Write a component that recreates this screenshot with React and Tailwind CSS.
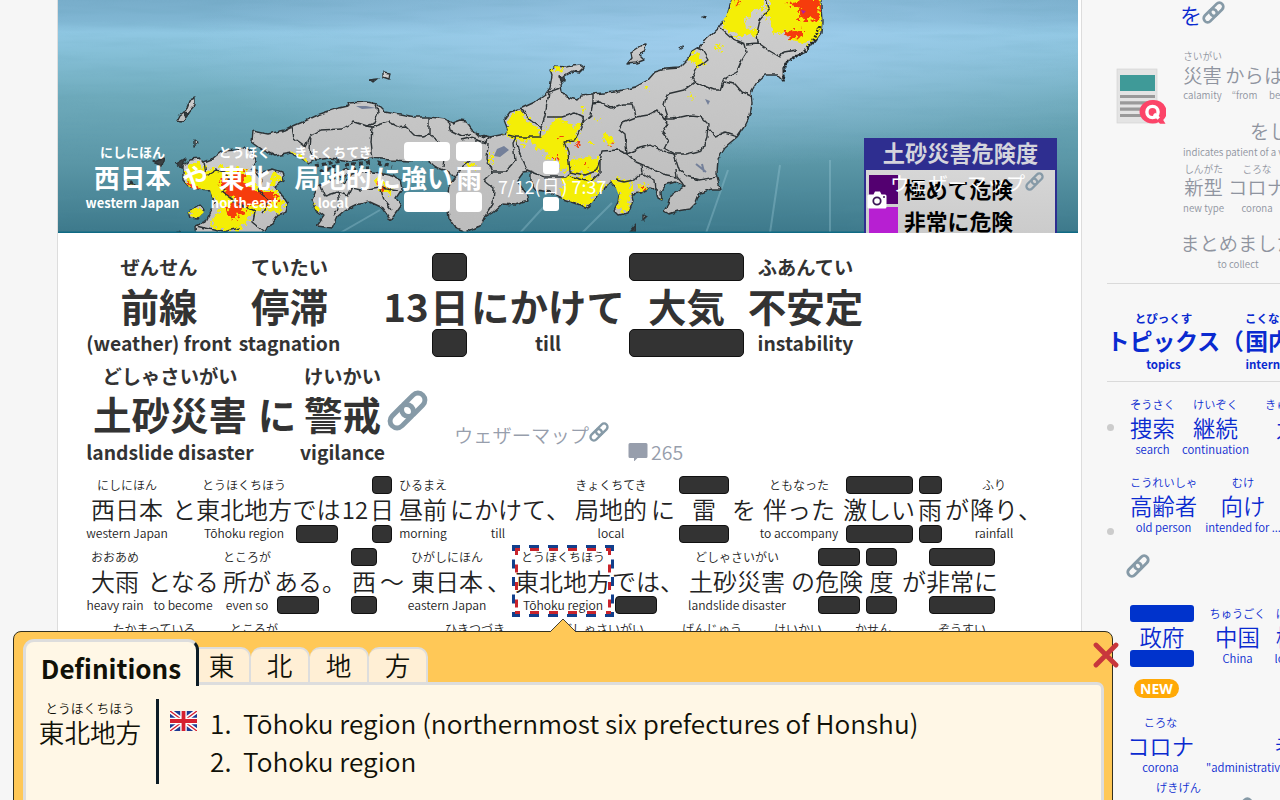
import React from "react";

/* Word metrics for each text scale: reading line, main line, gloss line */
const HERO = {
  ruby: "h-[19px] text-[13px]",
  main: "h-[31px] text-[25.7px]",
  gloss: "h-[20px] text-[13px]",
  box: "bg-white rounded-[4px]",
  nudge: "",
};
const HEAD = {
  ruby: "h-[28px] text-[19.3px]",
  main: "h-[48px] text-[38.5px]",
  gloss: "h-[28px] text-[19.3px]",
  box: "bg-[#333] border border-[#111] rounded-[5px]",
  nudge: "mt-[2px]",
};
const BODY = {
  ruby: "h-[18px] text-[12px]",
  main: "h-[30.5px] text-[24px]",
  gloss: "h-[18px] text-[12.1px]",
  box: "bg-[#333] border border-[#111] rounded-[4px]",
  nudge: "",
};
const SIDE = {
  ruby: "h-[14px] text-[9.7px]",
  main: "h-[25px] text-[19.3px]",
  gloss: "h-[14px] text-[9.7px]",
  box: "",
  nudge: "mt-[2px]",
};
const TOPIC = {
  ruby: "h-[17px] text-[11.5px]",
  main: "h-[29px] text-[22.8px]",
  gloss: "h-[17px] text-[11.5px]",
  box: "",
  nudge: "",
};
const LIST = {
  ruby: "h-[17px] text-[11.2px]",
  main: "h-[28px] text-[22.4px]",
  gloss: "h-[17px] text-[11.3px]",
  box: "bg-[#0033cc] rounded-[3px]",
  nudge: "",
};

const LINE = "flex w-full shrink-0 items-center justify-center leading-none";

/* a word with its reading above and gloss below; rb / gb are hidden (masked) lines */
function Word({ s, c, r, k, g, rb, gb }) {
  return (
    <span className={`flex shrink-0 flex-col items-center ${c}`}>
      <span className={`${LINE} ${s.ruby}`}>
        {rb ? <span className={`h-full shrink-0 ${rb} ${s.box}`} /> : <span className={s.nudge}>{r}</span>}
      </span>
      <span className={`${LINE} ${s.main}`}>{k}</span>
      <span className={`${LINE} ${s.gloss}`}>
        {gb ? <span className={`h-full shrink-0 ${gb} ${s.box}`} /> : <span className={s.nudge}>{g}</span>}
      </span>
    </span>
  );
}

function Row({ s, words, className = "" }) {
  return (
    <div className={`flex shrink-0 whitespace-nowrap ${className}`}>
      {words.map((w, i) => (
        <Word key={i} s={s} {...w} />
      ))}
    </div>
  );
}

function LinkIcon({ className }) {
  return (
    <svg viewBox="0 0 40 40" className={`shrink-0 ${className}`} fill="none" stroke="#869aa7" strokeWidth="4.8">
      <rect x="-13.3" y="-6.8" width="26.6" height="13.6" rx="6.800" transform="translate(25.6 14.4) rotate(-45)" />
      <rect x="-13.3" y="-6.8" width="26.6" height="13.6" rx="6.800" transform="translate(14.4 25.6) rotate(-45)" />
    </svg>
  );
}

const HONSHU =
  "M253 131L268 134 285 130 291 127 305 121 320 114 335 109 348 106 347 103 366 102 377 104 384 111 400 114 415 117 430 117 445 119 452 123 460 120 467 121 469 126 475 134 490 137 505 134 508 130 504 120 510 112 522 108 535 102 545 95 550 88 552 76 550 70 555 66 565 67 580 65 584 68 580 72 572 71 565 75 560 84 561 91 567 97 577 100 582 95 592 94 615 92 635 87 648 80 655 72 665 69 680 68 688 60 692 51 700 46 706 39 719 27 728 12 733 -4 821 -4 821 8 822 22 821 33 815 41 807 51 796 56 787 61 783 68 784 82 777 75 765 75 757 82 751 92 752 103 750 115 744 127 737 137 725 147 717 160 716 173 720 189 712 189 700 193 696 203 690 209 678 211 669 214 664 211 668 204 670 196 676 192 685 186 675 182 665 185 661 192 662 200 658 198 656 190 650 188 640 193 632 194 633 201 628 213 619 215 614 210 618 202 619 196 616 188 611 181 604 189 596 197 588 208 575 203 560 198 550 192 536 190 531 183 531 172 523 173 517 181 526 193 528 201 515 205 502 204 492 213 484 218 480 226 466 232 455 227 449 218 447 203 449 186 455 178 449 172 436 167 425 159 410 161 390 160 372 158 350 161 330 158 316 160 309 164 301 158 292 153 275 156 263 150 252 142Z";
const KYUSHU =
  "M183 166L190 159 200 158 204 162 212 159 222 151 238 150 244 146 253 153 255 162 251 169 262 172 273 169 282 172 284 180 275 186 280 192 288 204 286 212 278 215 268 228 262 240 196 240 195 226 205 222 210 212 214 202 210 190 200 189 190 188 183 180Z";
const SHIKOKU =
  "M318 186L328 181 337 179 344 183 352 174 366 171 380 173 392 176 400 180 402 189 396 198 401 206 391 220 383 208 370 202 355 205 345 210 337 217 332 228 317 226 324 216 315 209 312 200Z";
const BORDERS = [
  "M292 127L294 138 305 146 310 136 320 130 342 129 354 122 366 126 374 123 378 113 376 104",
  "M366 126L372 127 388 122 398 127 405 126 414 135 422 136 429 134 429 117",
  "M372 127L371 142 373 160",
  "M310 137L309 148 316 160",
  "M448 120L450 130 458 134 462 136 471 134M461 140L470 138 486 143 488 137M429 134L440 142 445 150 443 167",
  "M488 143L487 160 492 172 506 172 515 160 513 143 516 137M476 141L474 158 463 166 455 178M492 172L484 180 494 188 493 204 484 218",
  "M516 137L518 150 527 170M516 137L508 135M516 137L540 137 541 128 530 120 521 110",
  "M541 128L545 116 547 103 549 92 560 88",
  "M547 117L562 117 575 113 583 117 584 121 591 115 593 100 593 94",
  "M584 121L578 134 574 141 564 142 568 152 570 172 565 177 545 177 527 170",
  "M570 172L585 175 596 171 600 160 602 151 618 150 627 154 625 135 619 130 623 122 636 117 633 104 622 104 612 108 606 106 600 102 593 103",
  "M636 117L648 115 658 110 664 119 668 117 664 105 667 94 684 90 695 82 692 77 698 66 703 64 708 60 702 50 697 48",
  "M695 82L704 86 714 90 720 90 724 79 737 72 742 60 747 52 745 44 731 38 720 28",
  "M724 82L735 84 742 92 751 96",
  "M747 44L758 43 757 33 760 20 769 9 766 -2M758 43L768 50 780 57 784 52 796 50",
  "M664 119L672 119 690 115 700 116 708 124 707 137 702 150 686 154 674 154 664 148 668 140 662 132 668 122 664 119",
  "M708 128L715 136 725 133 737 137",
  "M627 154L640 148 651 145 664 152 674 154 679 170 686 176 700 180 716 177",
  "M627 154L636 162 650 168 662 174 677 177M641 165L642 173 634 180 624 182 616 180M600 160L600 173 590 182 570 176",
  "M677 177L676 170M677 177L683 184M642 173L655 180 656 190",
  "M204 162L206 176 216 170 225 172 231 182 222 192 238 204 254 212 252 222 264 232M253 168L262 180 258 190 270 200 262 212M196 226L222 232 240 228",
  "M320 184L325 196 338 192 348 196 352 188 362 190 380 187 398 190M338 192L340 206 333 216M380 187L384 200 392 210",
];
const YELLOW = [
  "M733 -4L767 -4 764 8 752 12 744 22 747 30 757 27 757 36 747 34 740 38 728 30 720 26Z",
  "M770 -4L821 -4 823 30 816 40 807 44 790 40 784 32 775 34 770 24 766 14Z",
  "M688 62L694 51 699 54 700 60 708 62 702 66 695 64Z",
  "M505 130L512 112 520 110 528 120 537 126 540 136 548 128 556 118 566 122 576 127 582 117 582 126 576 134 578 142 566 142 568 156 571 170 562 171 557 160 545 158 546 150 535 148 530 140 522 141 506 136Z",
  "M570 160L585 157 598 158 600 166 596 174 583 172 572 174Z",
  "M563 178L575 176 588 176 598 182 606 184 604 190 594 198 588 207 575 203 560 198 562 190Z",
  "M611 181L622 179 632 182 632 194 628 200 632 204 626 212 618 210 620 200 616 190Z",
  "M636 185L649 184 644 188 654 195 660 200 656 200 640 192Z",
  "M186 170L198 160 208 170 226 166 246 170 252 178 262 190 278 190 284 204 278 214 262 208 250 216 240 230 216 230 210 222 222 208 214 196 206 204 196 196 186 188Z",
  "M190 212L200 206 206 212 200 220 190 218ZM270 176L280 172 279 182 270 186Z",
  "M290 153L298 152 304 160 308 164 300 166ZM312 200L318 206 318 216 313 212ZM374 178L382 182 392 190 390 194 378 190Z",
  "M466 162L474 162 476 168 466 166ZM488 158L492 152 492 164ZM538 66L546 64 552 72 546 70Z",
  "M554 66L563 66 564 70 555 73ZM580 110L585 107 583 114ZM714 46L721 43 719 52ZM602 136L610 134 614 144 605 142Z",
  "M643 86L648 86 647 90ZM689 94L694 95 690 99ZM520 144L526 145 524 149ZM588 142L594 142 590 146ZM596 118L600 120 597 122Z",
];
const RED = [
  "M786 4L796 2 802 -2 820 -2 819 20 806 19 798 18 802 8Z",
  "M784 34L793 30 803 31 803 38 794 37 787 39Z",
  "M557 136L564 136 562 139ZM575 143L582 144 579 147ZM584 165L588 165 587 168ZM553 158L560 158 558 162ZM606 142L613 144 612 146ZM640 187L646 187 644 190Z",
  "M186 182L198 188 204 192 200 196 190 190ZM220 180L232 176 246 170 244 184 262 192 272 192 280 200 264 206 248 204 242 214 230 220 226 208 234 198 224 192ZM736 0L740 2 737 4ZM378 184L388 188 384 192Z",
];

function WeatherMap() {
  return (
    <svg viewBox="58 0 1020 233" preserveAspectRatio="none" className="block h-[233px] w-[1020px]">
      <defs>
        <linearGradient id="sea" x1="0" y1="0" x2="0" y2="1">
          <stop offset="0" stopColor="#78adca" />
          <stop offset="0.09" stopColor="#80b6d3" />
          <stop offset="0.14" stopColor="#8fc7e2" />
          <stop offset="0.24" stopColor="#84bed5" />
          <stop offset="0.42" stopColor="#6eaabb" />
          <stop offset="0.7" stopColor="#5a96a6" />
          <stop offset="1" stopColor="#3d798b" />
        </linearGradient>
        <radialGradient id="glow" cx="0.62" cy="0.22" r="0.5">
          <stop offset="0" stopColor="#a4cff0" stopOpacity="0.8" />
          <stop offset="1" stopColor="#a4cff0" stopOpacity="0" />
        </radialGradient>
        <linearGradient id="land" x1="0" y1="0" x2="0" y2="1">
          <stop offset="0" stopColor="#cfcfcf" />
          <stop offset="1" stopColor="#bcbcbc" />
        </linearGradient>
        <filter id="rough" x="-5%" y="-5%" width="110%" height="110%" colorInterpolationFilters="sRGB">
          <feTurbulence type="fractalNoise" baseFrequency="0.14" numOctaves="2" seed="4" />
          <feDisplacementMap in="SourceGraphic" scale="4.5" xChannelSelector="R" yChannelSelector="G" result="d" />
          <feGaussianBlur in="d" stdDeviation="0.35" />
        </filter>
        <filter id="speckle" x="-20%" y="-20%" width="140%" height="140%" colorInterpolationFilters="sRGB">
          <feTurbulence type="fractalNoise" baseFrequency="0.25" numOctaves="2" seed="9" />
          <feDisplacementMap in="SourceGraphic" scale="13" xChannelSelector="R" yChannelSelector="G" result="d" />
          <feGaussianBlur in="d" stdDeviation="0.4" />
        </filter>
        <clipPath id="coast">
          <path d={HONSHU} />
          <path d={KYUSHU} />
          <path d={SHIKOKU} />
          <path d="M188 212L198 206 204 212 198 218 190 218Z" />
        </clipPath>
        <filter id="ripple" x="0" y="0" width="100%" height="100%">
          <feTurbulence type="fractalNoise" baseFrequency="0.012 0.13" numOctaves="3" seed="2" />
          <feColorMatrix values="0 0 0 0 0.1  0 0 0 0 0.3  0 0 0 0 0.4  1.6 0 0 0 -0.7" />
        </filter>
      </defs>
      <rect x="58" width="1020" height="233" fill="url(#sea)" />
      <rect x="58" width="1020" height="233" fill="url(#glow)" />
      <rect x="58" width="1020" height="233" filter="url(#ripple)" opacity="0.14" />
      <g stroke="#a9d4e2" strokeOpacity="0.3" strokeWidth="2">
        <path d="M550 200L520 233M612 203L582 233M728 170L706 233M780 165L770 233M830 160V233" />
        <path d="M380 210L340 233" />
      </g>
      <g filter="url(#rough)" stroke="#2d3336" strokeWidth="1.4" strokeLinejoin="round">
        <g fill="url(#land)">
          <path d={HONSHU} />
          <path d={KYUSHU} />
          <path d={SHIKOKU} />
          <path d="M631 52L640 46 646 45 645 50 640 56 644 60 636 63 627 64 632 58Z" />
          <path d="M190 100L195 98 195 105 187 114 183 122 176 121 179 115 186 110Z" />
          <path d="M383 72L390 73 389 79 383 77ZM194 140L198 143 194 146ZM643 215L646 217 643 220Z" />
          <path d="M188 212L200 205 204 210 198 219 190 218ZM332 175L346 169 350 172 344 178Z" />
        </g>
        <path d="M369 80L378 79 373 83ZM183 112L189 113 186 116ZM153 162L164 158 162 166ZM176 164L186 158 182 168ZM559 77L565 76 565 82 560 81ZM630 232L636 225 635 232ZM178 231L184 233ZM680 48L683 46ZM703 17L705 18Z" fill="#3a4144" />
        <path d="M315 166L340 161M345 165L372 162M352 169L368 168M378 163L392 167M475 134L490 138M320 172L336 166" fill="none" strokeWidth="3.5" strokeDasharray="4 3" />
        <path d="M130 180L136 186 128 187Z" fill="#7d7c46" />
      </g>
      <g clipPath="url(#coast)">
        <g filter="url(#speckle)">
          {YELLOW.map((d, i) => (
            <path key={i} d={d} fill="#f4ee06" />
          ))}
          {RED.map((d, i) => (
            <path key={i} d={d} fill="#f63c0c" />
          ))}
        </g>
        <path d="M494 156L497 149 504 146 509 150 500 157ZM356 106L366 106 376 108 362 109ZM705 99L710 101 708 105Z" fill="#74809a" />
        <path d="M696 164L706 172M702 164L704 172" stroke="#74809a" strokeWidth="2" />
        <path d="M801 10L806 11 803 14ZM794 35L800 35Z" fill="#b01fa0" />
      </g>
      <g filter="url(#rough)" fill="none" stroke="#2d3336" strokeWidth="1.4" strokeLinejoin="round">
        {BORDERS.map((d, i) => (
          <path key={i} d={d} />
        ))}
      </g>
      <path d="M820 26L812 44 800 54 786 62 783 82" fill="none" stroke="#20262a" strokeWidth="3" strokeDasharray="2 1.5" filter="url(#rough)" />
      <rect x="58" y="231.5" width="1020" height="1.5" fill="#0f6a84" />
    </svg>
  );
}

function Legend() {
  return (
    <div className="absolute left-[806px] top-[138px] flex h-[95px] w-[193px] flex-col overflow-hidden border-x-[2px] border-[#2e2e90] bg-gradient-to-b from-[#dcdcdc] to-[#cbcbcb] font-bold">
      <div className="flex h-[32px] shrink-0 items-center justify-center bg-[#2e2e90] pb-[3px] text-[22.2px] leading-none text-[#d4d4dc]">土砂災害危険度</div>
      <div className="mt-[5px] flex h-[29px] shrink-0 items-center pl-[3px] text-[21.8px] leading-none text-black">
        <span className="mr-[6px] h-[29px] w-[29px] bg-[#530070]" />
        <span className="-mt-[2px]">極めて危険</span>
      </div>
      <div className="mt-[4px] flex h-[26px] shrink-0 items-center pl-[3px] text-[21.8px] leading-none text-black">
        <span className="mr-[6px] h-[28px] w-[29px] bg-[#b71fd2]" />
        非常に危険
      </div>
    </div>
  );
}

function Hero() {
  const title = [
    { c: "w-[93px]", r: "にしにほん", k: "西日本", g: "western Japan" },
    { c: "ml-[3px] w-[26px]", k: "や" },
    { c: "ml-[3px] w-[67px]", r: "とうほく", k: "東北", g: "north-east" },
    { c: "ml-[16px] w-[78px]", r: "きょくちてき", k: "局地的", g: "local" },
    { c: "ml-[3px] w-[26px]", k: "に" },
    { c: "ml-0 w-[52px]", k: "強い", rb: "w-[46px]", gb: "w-[46px]" },
    { c: "ml-[3px] w-[26px]", k: "雨", rb: "w-[26px]", gb: "w-[26px]" },
  ];
  return (
    <div className="relative h-[233px] w-[1020px] shrink-0 overflow-hidden text-white">
      <WeatherMap />
      <Legend />
      <div className="absolute left-[28px] top-[142px] flex font-bold">
        <Row s={HERO} words={title} />
        <div className="ml-[16px] flex text-[17.8px] font-normal leading-none">
          <span className="mt-[36px]">7/12(</span>
          <span className="mt-[19px] flex w-[20px] flex-col items-center">
            <span className="h-[13px] w-[16px] rounded-[3px] bg-white" />
            <span className="flex h-[23px] items-center">日</span>
            <span className="h-[14px] w-[16px] rounded-[3px] bg-white" />
          </span>
          <span className="mt-[36px] pl-px">) 7:37</span>
        </div>
      </div>
      <div className="absolute left-[832px] top-[172px] flex items-start text-[19.3px] leading-[22px]">
        ウェザーマップ
        <LinkIcon className="h-[19px] w-[19px]" />
      </div>
      <svg viewBox="0 0 20 18" className="absolute left-[809px] top-[191px] h-[18px] w-[20px]">
        <path d="M2 3.5h4.5L8 .5h5l1.500 3H18a1.500 1.500 0 0 1 1.500 1.500v11A1.500 1.500 0 0 1 18 17.500H2A1.500 1.500 0 0 1 .5 16V5A1.500 1.500 0 0 1 2 3.500z" fill="#fff" />
        <circle cx="10" cy="10" r="3.700" fill="#fff" stroke="#3b1556" strokeWidth="1.800" />
        <circle cx="17" cy="6" r="1" fill="#3b1556" />
      </svg>
    </div>
  );
}

function Headline() {
  return (
    <div className="flex shrink-0 flex-col pl-[28px] pt-[20px] font-bold text-[#333]">
      <Row
        s={HEAD}
        className="h-[108.500px]"
        words={[
          { c: "w-[146px]", r: "ぜんせん", k: "前線", g: "(weather) front" },
          { c: "ml-[7px] w-[101px]", r: "ていたい", k: "停滞", g: "stagnation" },
          { c: "ml-[43px] w-[46px]", k: "13" },
          { c: "ml-[3px] w-[35px]", k: "日", rb: "w-[35px]", gb: "w-[35px]" },
          { c: "ml-[4px] w-[154px]", k: "にかけて", g: "till" },
          { c: "ml-[4px] w-[115px]", k: "大気", rb: "w-[115px]", gb: "w-[115px]" },
          { c: "ml-[4px] w-[115px]", r: "ふあんてい", k: "不安定", g: "instability" },
        ]}
      />
      <div className="flex">
        <Row
          s={HEAD}
          words={[
            { c: "w-[168px]", r: "どしゃさいがい", k: "土砂災害", g: "landslide disaster" },
            { c: "ml-[4px] w-[38px]", k: "に" },
            { c: "ml-[4px] w-[85px]", r: "けいかい", k: "警戒", g: "vigilance" },
          ]}
        />
        <LinkIcon className="ml-[2px] mt-[28px] h-[41px] w-[41px]" />
        <div className="ml-[26px] mt-[60px] flex h-[22px] items-start text-[19.3px] font-[350] leading-[27px] text-[#979eac]">
          ウェザーマップ
          <LinkIcon className="h-[20px] w-[20px]" />
        </div>
        <div className="ml-[19px] mt-[79px] flex h-[22px] items-center text-[19.5px] font-[350] leading-none text-[#979eac]">
          <svg viewBox="0 0 20 18" className="mr-[3px] h-[18px] w-[20px]">
            <path d="M2 0h16a1.500 1.500 0 0 1 1.500 1.500v12A1.500 1.500 0 0 1 18 15h-8.500L6 18.500V15H2A1.500 1.500 0 0 1 .5 13.500v-12A1.500 1.500 0 0 1 2 0z" fill="#979eac" />
          </svg>
          265
        </div>
      </div>
    </div>
  );
}

function Article() {
  return (
    <div className="flex shrink-0 flex-col pl-[28px] pt-[10.500px] font-[350] text-[#222]">
      <Row
        s={BODY}
        className="h-[71.500px]"
        words={[
          { c: "w-[82px]", r: "にしにほん", k: "西日本", g: "western Japan" },
          { c: "ml-[4px] w-[24px]", k: "と" },
          { c: "w-[96px]", r: "とうほくちほう", k: "東北地方", g: "Tōhoku region" },
          { c: "w-[49px]", k: "では", gb: "w-[42px]" },
          { c: "w-[28px]", k: "12" },
          { c: "ml-[3px] w-[20px]", k: "日", rb: "w-[20px]", gb: "w-[20px]" },
          { c: "ml-[6px] w-[50px]", r: "ひるまえ", k: "昼前", g: "morning" },
          { c: "ml-[2px] w-[96px]", k: "にかけて", g: "till" },
          { c: "w-[24px]", k: "、" },
          { c: "ml-[5px] w-[72px]", r: "きょくちてき", k: "局地的", g: "local" },
          { c: "ml-[4px] w-[24px]", k: "に" },
          { c: "ml-[4px] w-[50px]", k: "雷", rb: "w-[50px]", gb: "w-[50px]" },
          { c: "ml-[3px] w-[24px]", k: "を" },
          { c: "ml-[3px] w-[80px]", r: "ともなった", k: "伴った", g: "to accompany" },
          { c: "ml-[4px] w-[72px]", k: "激しい", rb: "w-[67px]", gb: "w-[67px]" },
          { c: "ml-[3px] w-[24px]", k: "雨", rb: "w-[23px]", gb: "w-[23px]" },
          { c: "ml-[3px] w-[24px]", k: "が" },
          { c: "ml-px w-[48px]", r: "ふり", k: "降り", g: "rainfall" },
          { c: "w-[24px]", k: "、" },
        ]}
      />
      <Row
        s={BODY}
        className="h-[72px]"
        words={[
          { c: "w-[58px]", r: "おおあめ", k: "大雨", g: "heavy rain" },
          { c: "ml-[3px] w-[72px]", k: "となる", g: "to become" },
          { c: "ml-[4px] w-[48px]", r: "ところが", k: "所が", g: "even so" },
          { c: "ml-[4px] w-[46px]", k: "ある", gb: "w-[42px]" },
          { c: "ml-px w-[24px]", k: "。" },
          { c: "ml-[5px] w-[26px]", k: "西", rb: "w-[26px]", gb: "w-[26px]" },
          { c: "ml-[3px] w-[24px]", k: "〜" },
          { c: "ml-[3px] w-[80px]", r: "ひがしにほん", k: "東日本", g: "eastern Japan" },
          { c: "w-[24px]", k: "、" },
          { c: "ml-[4px] w-[96px]", r: "とうほくちほう", k: "東北地方", g: "Tōhoku region" },
          { c: "ml-[1px] w-[48px]", k: "では", gb: "w-[42px]" },
          { c: "w-[24px]", k: "、" },
          { c: "ml-[3px] w-[100px]", r: "どしゃさいがい", k: "土砂災害", g: "landslide disaster" },
          { c: "ml-[4px] w-[24px]", k: "の" },
          { c: "w-[48px]", k: "危険", rb: "w-[42px]", gb: "w-[42px]" },
          { c: "ml-[3px] w-[31px]", k: "度", rb: "w-[31px]", gb: "w-[31px]" },
          { c: "ml-[5px] w-[24px]", k: "が" },
          { c: "w-[72px]", k: "非常に", rb: "w-[66px]", gb: "w-[66px]" },
        ]}
      />
      <Row
        s={BODY}
        words={[
          { c: "ml-[24px] w-[88px]", r: "たかまっている" },
          { c: "ml-[32px] w-[48px]", r: "ところが" },
          { c: "ml-[167px] w-[60px]", r: "ひきつづき" },
          { c: "ml-[55px] w-[84px]", r: "どしゃさいがい" },
          { c: "ml-[38px] w-[60px]", r: "げんじゅう" },
          { c: "ml-[32px] w-[48px]", r: "けいかい" },
          { c: "ml-[33px] w-[36px]", r: "かせん" },
          { c: "ml-[47px] w-[48px]", r: "ぞうすい" },
        ]}
      />
    </div>
  );
}

function Bullet({ className }) {
  return <span className={`h-[7px] w-[7px] shrink-0 rounded-full bg-[#ccc] ${className}`} />;
}

function Sidebar() {
  return (
    <aside className="flex h-[800px] w-[199px] shrink-0 flex-col overflow-hidden bg-[#f7f7f7] pl-[25px] font-[350] text-[#0a2ad0]">
      <div className="flex h-[49px] shrink-0 items-start pl-[73px] text-[22px]">
        <span className="leading-[29px]">を</span>
        <LinkIcon className="mt-px h-[23px] w-[23px]" />
      </div>
      <div className="flex h-[235px] shrink-0 border-b border-[#dadada] text-[#8f949f]">
        <svg viewBox="0 0 50 57" className="ml-[9px] mt-[19px] h-[57px] w-[50px] shrink-0">
          <rect x="1" y="1" width="40" height="54" fill="#e4e4e4" stroke="#d4d4d4" strokeWidth="0.700" />
          <rect x="4" y="7" width="35" height="16" fill="#3f9a98" />
          <path d="M4 28.500h35M4 34.800h35M4 41.200h35M4 47.500h35" stroke="#9a9a9a" strokeWidth="3.200" />
          <path d="M36.500 32a13 11.800 0 1 0 6 22.300l1.500 1.500H49.500l-2.300-3.800A13 12 0 0 0 36.500 32z" fill="#fc4468" />
          <circle cx="36.500" cy="44" r="5.600" fill="none" stroke="#fff" strokeWidth="3.400" />
          <path d="M38 46l4.800 4.500" stroke="#fff" strokeWidth="3.400" />
        </svg>
        <div className="flex flex-col pl-[17px]">
          <Row
            s={SIDE}
            className="h-[56.500px]"
            words={[
              { c: "w-[39px]", r: "さいがい", k: "災害", g: "calamity" },
              { c: "ml-[3px] w-[39px]", k: "から", g: "“from" },
              { c: "w-[39px] *:justify-start", k: "はじ", g: <span className="ml-[5px]">beginning</span> },
            ]}
          />
          <Row
            s={SIDE}
            className="h-[56px]"
            words={[
              {
                c: "w-[174px] *:justify-start",
                k: <span className="ml-[67px]">をした</span>,
                g: "indicates patient of a verb…",
              },
            ]}
          />
          <Row
            s={SIDE}
            className="h-[56px]"
            words={[
              { c: "w-[41px]", r: "しんがた", k: "新型", g: "new type" },
              { c: "ml-[4px] w-[58px]", r: "ころな", k: "コロナ", g: "corona" },
            ]}
          />
          <Row s={SIDE} words={[{ c: "-ml-[3px] w-[116px]", k: "まとめました", g: "to collect" }]} />
        </div>
      </div>
      <div className="flex h-[98px] shrink-0 border-b border-[#dadada] pt-[26px] font-bold">
        <Row
          s={TOPIC}
          words={[
            { c: "-ml-[1px] w-[115px]", r: "とぴっくす", k: "トピックス", g: "topics" },
            { c: "w-[23px]", k: "（" },
            { c: "ml-[1px] w-[46px]", r: "こくない", k: "国内", g: "internal" },
          ]}
        />
      </div>
      <div className="flex h-[78px] shrink-0 pt-[14px]">
        <Bullet className="mt-[28px]" />
        <Row
          s={LIST}
          className="pl-[16px]"
          words={[
            { c: "w-[45px]", r: "そうさく", k: "捜索", g: "search" },
            { c: "ml-[7px] w-[67px]", r: "けいぞく", k: "継続", g: "continuation" },
            { c: "ml-[16px] w-[67px]", r: "きゅうしゅう", k: "九州" },
          ]}
        />
      </div>
      <div className="flex h-[80px] shrink-0 pt-[14px]">
        <Bullet className="mt-[54px]" />
        <Row
          s={LIST}
          className="pl-[16px]"
          words={[
            { c: "w-[67px]", r: "こうれいしゃ", k: "高齢者", g: "old person" },
            { c: "ml-[7px] w-[78px]", r: "むけ", k: "向け", g: "intended for ..." },
          ]}
        />
      </div>
      <div className="flex h-[65px] shrink-0 pl-[19px] pt-[14px]">
        <LinkIcon className="h-[24px] w-[24px]" />
      </div>
      <Row
        s={LIST}
        className="h-[74px] pl-[23px]"
        words={[
          { c: "w-[64px]", k: "政府", rb: "w-[64px]", gb: "w-[64px]" },
          { c: "ml-[16px] w-[55px]", r: "ちゅうごく", k: "中国", g: "China" },
          { c: "ml-[9px] w-[26px]", r: "はし", k: "橋", g: "logic" },
        ]}
      />
      <div className="flex h-[35.500px] shrink-0 pl-[27px]">
        <span className="flex h-[19px] w-[45px] items-center justify-center rounded-full bg-[#ffa907] font-['Noto_Sans','Open_Sans',sans-serif] text-[14px] font-bold leading-none text-white">
          NEW
        </span>
      </div>
      <Row
        s={LIST}
        className="h-[65px] pl-[20px]"
        words={[
          { c: "w-[67px]", r: "ころな", k: "コロナ", g: "corona" },
          {
            c: "ml-[12px] w-[160px] *:justify-start",
            k: <span className="ml-[69px]">者</span>,
            g: "\"administrative divis…",
          },
        ]}
      />
      <div className="flex shrink-0">
        <Row s={LIST} className="pl-[49px]" words={[{ c: "w-[45px]", r: "げきげん", k: "激減" }]} />
        <LinkIcon className="ml-[29px] mt-[17px] h-[23px] w-[23px]" />
      </div>
    </aside>
  );
}

function Flag() {
  return (
    <svg viewBox="0 0 27 20" className="mt-[12px] h-[20px] w-[27px] shrink-0">
      <rect width="27" height="20" rx="1" fill="#1f3a93" />
      <path d="M0 0l27 20M27 0L0 20" stroke="#fff" strokeWidth="4.500" />
      <path d="M0 0l27 20M27 0L0 20" stroke="#d6202f" strokeWidth="1.400" />
      <path d="M13.500 0v20M0 10h27" stroke="#fff" strokeWidth="6.500" />
      <path d="M13.500 0v20M0 10h27" stroke="#d6202f" strokeWidth="3.800" />
    </svg>
  );
}

function Popup() {
  const tab =
    "flex h-[38px] w-[59px] shrink-0 items-center justify-center rounded-t-[10px] border-r-2 border-t-2 border-[#dddddd] bg-[#ffefd5] pb-[4px] leading-none";
  return (
    <div className="absolute left-[13px] top-[631px] flex h-[180px] w-[1100px] flex-col rounded-t-[8px] border border-[#33301f] bg-[#ffc857] pl-[9px] pr-[8px] text-[25.6px] font-[350] text-[#111108]">
      <svg viewBox="0 0 26 14" className="absolute left-[536px] top-[-14px] h-[14px] w-[26px]">
        <path d="M0 14L13 1l13 13z" fill="#ffc857" />
        <path d="M0 14L13 1l13 13" fill="none" stroke="#444030" strokeWidth="1" />
      </svg>
      <svg viewBox="0 0 26 26" className="absolute left-[1079px] top-[10px] h-[26px] w-[26px]">
        <path d="M3 3l20 20M23 3l-20 20" stroke="#c8373c" strokeWidth="4.800" strokeLinecap="round" />
      </svg>
      <div className="flex h-[54px] shrink-0 items-end pt-[7px]">
        <div className="relative z-10 flex h-[47px] w-[176px] shrink-0 items-center justify-center rounded-t-[11px] border-l-[3px] border-r-[3px] border-t-[3px] border-[#dddddd] border-r-[#0c1c26] bg-[#fff7e6] pt-[7px] text-[26px] font-bold leading-none">
          Definitions
        </div>
        <div className="mb-px flex">
          <div className="flex h-[38px] w-[52px] shrink-0 items-center justify-center rounded-tr-[10px] border-r-2 border-t-2 border-[#dddddd] bg-[#ffefd5] pb-[4px] pr-[5px] leading-none">東</div>
          <div className={tab}>北</div>
          <div className={tab}>地</div>
          <div className={tab}>方</div>
        </div>
      </div>
      <div className="-mt-[4px] flex grow rounded-tr-[7px] border-l-[3px] border-r-[3px] border-t-[3px] border-[#dddddd] bg-[#fff7e6] pl-[13px] pt-[14px]">
        <div className="flex w-[102px] shrink-0 flex-col items-center whitespace-nowrap leading-none">
          <span className="text-[12.800px] leading-[18px]">とうほくちほう</span>
          <span className="mt-px leading-[28px]">東北地方</span>
        </div>
        <div className="ml-[15px] mt-0 h-[85px] w-[3px] shrink-0 bg-[#0c1c26]" />
        <div className="ml-[11px] flex">
          <Flag />
          <ol className="flex flex-col pl-[13px] pt-[5px] text-[26.2px] leading-[38px]">
            <li className="flex">
              <span className="w-[33px]">1.</span>Tōhoku region (northernmost six prefectures of Honshu)
            </li>
            <li className="flex">
              <span className="w-[33px]">2.</span>Tohoku region
            </li>
          </ol>
        </div>
      </div>
    </div>
  );
}

export default function App() {
  return (
    <div className="relative flex h-[800px] w-[1280px] overflow-hidden bg-[#f6f6f6] font-['Noto_Sans_CJK_JP',sans-serif]">
      <main className="ml-[57px] flex h-[800px] w-[1025px] shrink-0 flex-col overflow-hidden border-l border-r border-[#dddddd] bg-white">
        <Hero />
        <Headline />
        <Article />
      </main>
      <Sidebar />
      <svg viewBox="0 0 102 72" className="absolute left-[512px] top-[545px] h-[72px] w-[102px]" fill="none" strokeWidth="3">
        <g stroke="#c8242c">
          <path d="M3 4.500H99M3 67.500H99" strokeDasharray="9 10" strokeDashoffset="4" />
          <path d="M4.500 3V69M97.500 3V69" strokeDasharray="8 9.500" strokeDashoffset="1" />
        </g>
        <g stroke="#123f8c">
          <path d="M0 1.500H102M0 70.500H102" strokeDasharray="10 9" strokeDashoffset="2" />
          <path d="M1.500 0V72M100.500 0V72" strokeDasharray="9 8.500" strokeDashoffset="3" />
        </g>
      </svg>
      <Popup />
    </div>
  );
}
